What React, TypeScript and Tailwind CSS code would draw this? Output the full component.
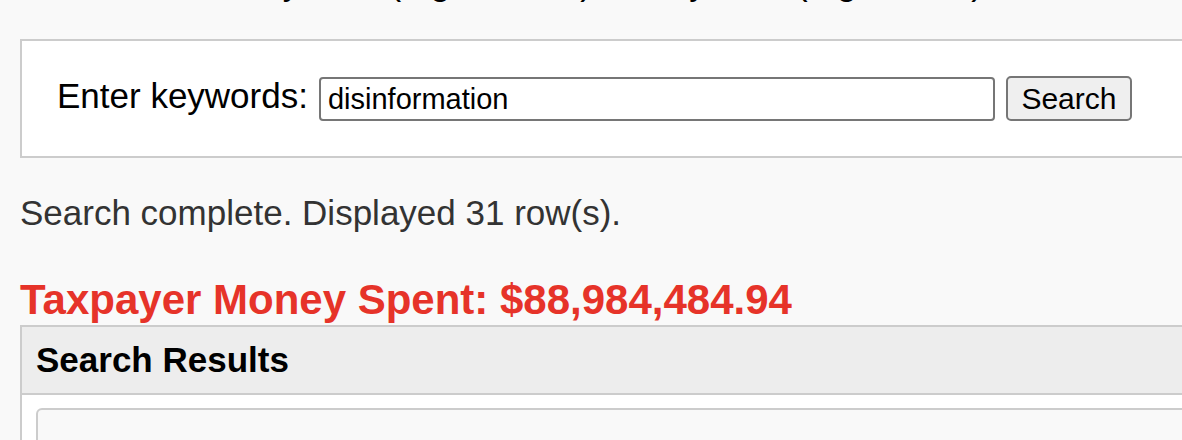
import { useState } from "react";

const ROWS = 31;
const TOTAL = "$88,984,484.94";

export default function App() {
  const [keywords, setKeywords] = useState("disinformation");

  return (
    <div className="h-[440px] w-full overflow-hidden bg-[#f9f9f9] font-['Liberation_Sans',Arial,sans-serif] text-[35px] leading-[40px] text-black">
      <div className="w-[1240px] px-[20px]">
        {/* intro line, scrolled mostly out of view */}
        <p className="-mt-[37px] whitespace-nowrap text-black">
          Search awards by term (e.g. climate) and by term (e.g. health) to see where it went
        </p>

        {/* Search form */}
        <form
          className="mt-[36px] border-2 border-[#cccccc] bg-white p-[35px]"
          onSubmit={(e) => e.preventDefault()}
        >
          <div className="flex items-start">
            <label htmlFor="kw" className="mr-[11px] whitespace-nowrap">
              Enter keywords:
            </label>
            <input
              id="kw"
              value={keywords}
              onChange={(e) => setKeywords(e.target.value)}
              className="mt-[1px] h-[44px] w-[676px] rounded-[4px] border-2 border-[#767676] bg-white px-[7px] text-[29px] leading-[33px] text-black outline-none"
            />
            <button
              type="submit"
              className="ml-[11px] h-[45px] w-[126px] rounded-[5px] border-2 border-[#767676] bg-[#efefef] text-[30px] leading-[33px] text-black"
            >
              Search
            </button>
          </div>
        </form>

        <p className="mt-[35px] text-[#333333]">
          Search complete. Displayed {ROWS} row(s).
        </p>

        <h3 className="mt-[43px] text-[42px] font-bold leading-[48px] text-[#e63329]">
          Taxpayer Money Spent: {TOTAL}
        </h3>

        {/* Results panel */}
        <section className="mt-[1px] border-2 border-[#cccccc] bg-white">
          <div className="border-b-2 border-[#cccccc] bg-[#ededed] px-[14px] py-[13px] font-bold">
            Search Results
          </div>
          <div className="px-[14px] pt-[13px]">
            <div className="h-[200px] rounded-[6px] border-2 border-[#cccccc] bg-[#f9f9f9]" />
          </div>
        </section>
      </div>
    </div>
  );
}
